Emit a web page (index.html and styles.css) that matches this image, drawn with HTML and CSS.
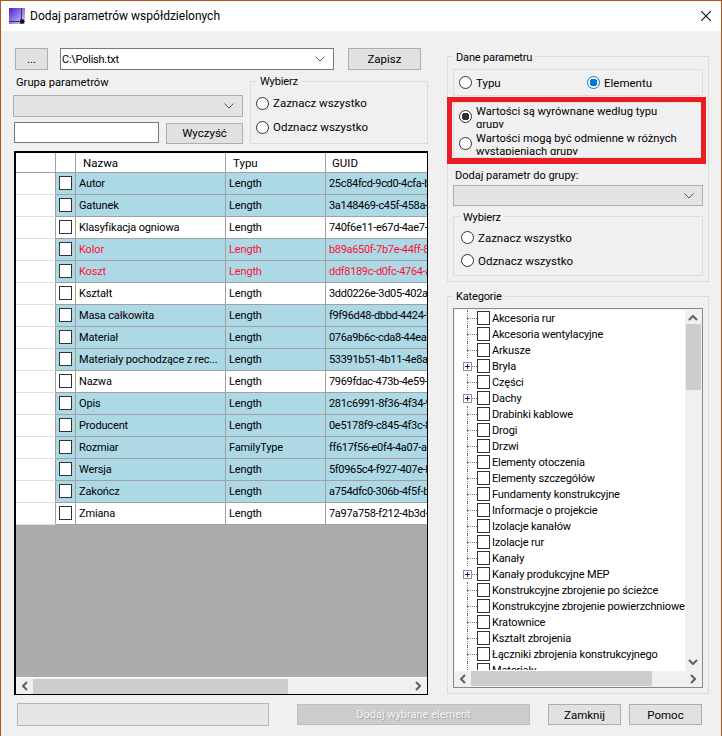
FILE: index.html
```html
<!DOCTYPE html>
<html lang="pl">
<head>
<meta charset="utf-8">
<title>Dodaj parametrów współdzielonych</title>
<link rel="stylesheet" href="styles.css">
</head>
<body>
<div class="window">
  <header class="titlebar">
    <svg class="app-icon" width="17" height="17" viewBox="0 0 17 17">
      <defs><linearGradient id="g" x1="0" y1="0" x2="1" y2="1"><stop offset="0" stop-color="#4a1fd6"/><stop offset="1" stop-color="#d9d2f5"/></linearGradient></defs>
      <rect width="16" height="16" fill="url(#g)"/>
      <path d="M0 13.5H16M12.5 0V16" stroke="#3b3560" stroke-width="1"/>
      <rect x="11" y="11.5" width="4" height="4" fill="#111"/>
    </svg>
    <span class="title">Dodaj parametrów współdzielonych</span>
    <svg class="close" width="10" height="10" viewBox="0 0 10 10"><path d="M0 0L10 10M10 0L0 10" stroke="#111" stroke-width="1.1"/></svg>
  </header>
  <main class="content">
    <section class="left">
      <div class="file-row">
        <button class="btn btn-dots">...</button>
        <div class="combo combo-file"><span>C:\Polish.txt</span><svg class="chev" width="10" height="6" viewBox="0 0 10 6"><path d="M.5 .5L5 5L9.5 .5" fill="none" stroke="#555"/></svg></div>
        <button class="btn btn-save">Zapisz</button>
      </div>
      <div class="filter-row">
        <div class="filter">
          <div class="filter-label">Grupa parametrów</div>
          <div class="combo combo-off combo-group"><svg class="chev" width="10" height="6" viewBox="0 0 10 6"><path d="M.5 .5L5 5L9.5 .5" fill="none" stroke="#555"/></svg></div>
          <div class="search-row">
            <div class="search"></div>
            <button class="btn btn-clear">Wyczyść</button>
          </div>
        </div>
        <div class="group group-select">
          <div class="legend">Wybierz</div>
          <label class="radio-row"><i class="radio"></i>Zaznacz wszystko</label>
          <label class="radio-row"><i class="radio"></i>Odznacz wszystko</label>
        </div>
      </div>
      <div class="table">
        <div class="tr th">
          <div class="rh"></div><div class="td"></div><div class="td h-name">Nazwa</div><div class="td h-name">Typu</div><div class="td h-name h-last">GUID</div>
        </div>
        <div class="tr blue"><div class="rh"></div><div class="td c"><i class="check"></i></div><div class="td">Autor</div><div class="td">Length</div><div class="td last">25c84fcd-9cd0-4cfa-b1e2</div></div>
        <div class="tr blue"><div class="rh"></div><div class="td c"><i class="check"></i></div><div class="td">Gatunek</div><div class="td">Length</div><div class="td last">3a148469-c45f-458a-9d10</div></div>
        <div class="tr"><div class="rh"></div><div class="td c"><i class="check"></i></div><div class="td">Klasyfikacja ogniowa</div><div class="td">Length</div><div class="td last">740f6e11-e67d-4ae7-8c21</div></div>
        <div class="tr blue red"><div class="rh"></div><div class="td c"><i class="check"></i></div><div class="td">Kolor</div><div class="td">Length</div><div class="td last">b89a650f-7b7e-44ff-8a02</div></div>
        <div class="tr blue red"><div class="rh"></div><div class="td c"><i class="check"></i></div><div class="td">Koszt</div><div class="td">Length</div><div class="td last">ddf8189c-d0fc-4764-a3b1</div></div>
        <div class="tr"><div class="rh"></div><div class="td c"><i class="check"></i></div><div class="td">Kształt</div><div class="td">Length</div><div class="td last">3dd0226e-3d05-402a-b7c4</div></div>
        <div class="tr blue"><div class="rh"></div><div class="td c"><i class="check"></i></div><div class="td">Masa całkowita</div><div class="td">Length</div><div class="td last">f9f96d48-dbbd-4424-9e70</div></div>
        <div class="tr blue"><div class="rh"></div><div class="td c"><i class="check"></i></div><div class="td">Materiał</div><div class="td">Length</div><div class="td last">076a9b6c-cda8-44ea-8f15</div></div>
        <div class="tr blue"><div class="rh"></div><div class="td c"><i class="check"></i></div><div class="td">Materiały pochodzące z rec...</div><div class="td">Length</div><div class="td last">53391b51-4b11-4e8a-a6d3</div></div>
        <div class="tr"><div class="rh"></div><div class="td c"><i class="check"></i></div><div class="td">Nazwa</div><div class="td">Length</div><div class="td last">7969fdac-473b-4e59-b2c8</div></div>
        <div class="tr blue"><div class="rh"></div><div class="td c"><i class="check"></i></div><div class="td">Opis</div><div class="td">Length</div><div class="td last">281c6991-8f36-4f34-9a47</div></div>
        <div class="tr blue"><div class="rh"></div><div class="td c"><i class="check"></i></div><div class="td">Producent</div><div class="td">Length</div><div class="td last">0e5178f9-c845-4f3c-8d66</div></div>
        <div class="tr blue"><div class="rh"></div><div class="td c"><i class="check"></i></div><div class="td">Rozmiar</div><div class="td">FamilyType</div><div class="td last">ff617f56-e0f4-4a07-a1b9</div></div>
        <div class="tr blue"><div class="rh"></div><div class="td c"><i class="check"></i></div><div class="td">Wersja</div><div class="td">Length</div><div class="td last">5f0965c4-f927-407e-b3d2</div></div>
        <div class="tr blue"><div class="rh"></div><div class="td c"><i class="check"></i></div><div class="td">Zakończ</div><div class="td">Length</div><div class="td last">a754dfc0-306b-4f5f-b8a1</div></div>
        <div class="tr"><div class="rh"></div><div class="td c"><i class="check"></i></div><div class="td">Zmiana</div><div class="td">Length</div><div class="td last">7a97a758-f212-4b3d-96e0</div></div>
        <div class="table-fill"></div>
        <div class="hbar hbar-table">
          <svg width="6" height="10" viewBox="0 0 6 10"><path d="M5 1L1 5L5 9" fill="none" stroke="#606060" stroke-width="2"/></svg>
          <div class="track"><div class="thumb thumb-table"></div></div>
          <svg width="6" height="10" viewBox="0 0 6 10"><path d="M1 1L5 5L1 9" fill="none" stroke="#606060" stroke-width="2"/></svg>
        </div>
      </div>
    </section>
    <section class="right">
      <div class="group group-data">
        <div class="legend">Dane parametru</div>
        <div class="box box-kind">
          <label class="radio-row kind-type"><i class="radio"></i>Typu</label>
          <label class="radio-row"><i class="radio radio-blue"></i>Elementu</label>
        </div>
        <div class="highlight">
          <label class="radio-wrap"><i class="radio radio-dark"></i><span class="clip">Wartości są wyrównane według typu grupy</span></label>
          <label class="radio-wrap"><i class="radio"></i><span class="clip">Wartości mogą być odmienne w różnych wystąpieniach grupy</span></label>
        </div>
        <div class="add-label">Dodaj parametr do grupy:</div>
        <div class="combo combo-off combo-add"><svg class="chev" width="10" height="6" viewBox="0 0 10 6"><path d="M.5 .5L5 5L9.5 .5" fill="none" stroke="#555"/></svg></div>
        <div class="group group-select2">
          <div class="legend">Wybierz</div>
          <label class="radio-row"><i class="radio"></i>Zaznacz wszystko</label>
          <label class="radio-row"><i class="radio"></i>Odznacz wszystko</label>
        </div>
      </div>
      <div class="group group-cat">
        <div class="legend">Kategorie</div>
        <div class="tree">
          <div class="tree-main">
            <ul class="tree-list">
              <li><i class="branch"></i><i class="check"></i>Akcesoria rur</li>
              <li><i class="branch"></i><i class="check"></i>Akcesoria wentylacyjne</li>
              <li><i class="branch"></i><i class="check"></i>Arkusze</li>
              <li><i class="branch plus"></i><i class="check"></i>Bryła</li>
              <li><i class="branch"></i><i class="check"></i>Części</li>
              <li><i class="branch plus"></i><i class="check"></i>Dachy</li>
              <li><i class="branch"></i><i class="check"></i>Drabinki kablowe</li>
              <li><i class="branch"></i><i class="check"></i>Drogi</li>
              <li><i class="branch"></i><i class="check"></i>Drzwi</li>
              <li><i class="branch"></i><i class="check"></i>Elementy otoczenia</li>
              <li><i class="branch"></i><i class="check"></i>Elementy szczegółów</li>
              <li><i class="branch"></i><i class="check"></i>Fundamenty konstrukcyjne</li>
              <li><i class="branch"></i><i class="check"></i>Informacje o projekcie</li>
              <li><i class="branch"></i><i class="check"></i>Izolacje kanałów</li>
              <li><i class="branch"></i><i class="check"></i>Izolacje rur</li>
              <li><i class="branch"></i><i class="check"></i>Kanały</li>
              <li><i class="branch plus"></i><i class="check"></i>Kanały produkcyjne MEP</li>
              <li><i class="branch"></i><i class="check"></i>Konstrukcyjne zbrojenie po ścieżce</li>
              <li><i class="branch"></i><i class="check"></i>Konstrukcyjne zbrojenie powierzchniowe</li>
              <li><i class="branch"></i><i class="check"></i>Kratownice</li>
              <li><i class="branch"></i><i class="check"></i>Kształt zbrojenia</li>
              <li><i class="branch"></i><i class="check"></i>Łączniki zbrojenia konstrukcyjnego</li>
              <li><i class="branch"></i><i class="check"></i>Materiały</li>
            </ul>
            <div class="vbar">
              <svg width="10" height="6" viewBox="0 0 10 6"><path d="M1 5L5 1L9 5" fill="none" stroke="#606060" stroke-width="2"/></svg>
              <div class="vtrack"><div class="vthumb"></div></div>
              <svg width="10" height="6" viewBox="0 0 10 6"><path d="M1 1L5 5L9 1" fill="none" stroke="#606060" stroke-width="2"/></svg>
            </div>
          </div>
          <div class="hbar hbar-tree">
            <svg width="6" height="10" viewBox="0 0 6 10"><path d="M5 1L1 5L5 9" fill="none" stroke="#606060" stroke-width="2"/></svg>
            <div class="track"><div class="thumb thumb-tree"></div></div>
            <svg width="6" height="10" viewBox="0 0 6 10"><path d="M1 1L5 5L1 9" fill="none" stroke="#606060" stroke-width="2"/></svg>
          </div>
        </div>
      </div>
    </section>
    <footer class="footer">
      <div class="status"></div>
      <button class="btn btn-add">Dodaj wybrane element</button>
      <button class="btn btn-foot btn-close">Zamknij</button>
      <button class="btn btn-foot">Pomoc</button>
    </footer>
  </main>
</div>
</body>
</html>
```

FILE: styles.css
```css
* { box-sizing: border-box; }
html, body { margin: 0; padding: 0; }
body { width: 722px; height: 736px; overflow: hidden; font-family: Roboto, "Noto Sans", sans-serif; font-size: 11px; color: #000; background: #f0f0f0; }

.window { width: 722px; height: 736px; border: 1px solid #b7541c; border-bottom: 0; display: flex; flex-direction: column; }

.titlebar { height: 30px; flex: none; background: #fff; display: flex; align-items: center; padding-left: 8px; }
.app-icon { margin-right: 4px; }
.title { font-size: 12px; flex: 1; }
.close { margin-right: 10px; margin-top: -1px; }

.content { flex: 1; display: grid; grid-template-columns: 414px 262px; grid-template-rows: 647px auto; column-gap: 19px; padding: 17px 0 0 13px; }

.left { display: flex; flex-direction: column; min-height: 0; }
.right { display: flex; flex-direction: column; padding-top: 8px; }

.btn { font: inherit; font-size: 11.5px; color: #000; background: #e1e1e1; border: 1px solid #adadad; padding: 0; height: 22px; line-height: 18px; }
.file-row { display: flex; align-items: flex-start; height: 22px; margin-left: 1px; }
.btn-dots { width: 33px; margin-right: 12px; }
.btn-save { width: 73px; margin-left: 14px; }

.combo { display: flex; align-items: center; justify-content: space-between; height: 22px; border: 1px solid #7a7a7a; background: #fff; padding: 0 4px 0 1px; }
.combo-file { width: 274px; letter-spacing: -.25px; }
.combo-off { background: #e3e3e3; border-color: #adadad; justify-content: flex-end; }
.chev { flex: none; margin-right: 4px; }

.filter-row { display: flex; margin-top: 11px; height: 64px; }
.filter { width: 230px; margin-left: -1px; margin-right: 7px; flex: none; }
.filter-label { height: 14px; line-height: 16px; margin: -6px 0 6px 3px; font-size: 11.2px; }
.combo-group { width: 230px; }
.search-row { display: flex; align-items: flex-start; margin-top: 5px; margin-left: 1px; }
.search { width: 145px; height: 21px; background: #fff; border: 1px solid #7a7a7a; }
.btn-clear { width: 77px; height: 21px; margin-left: 7px; margin-top: 1px; line-height: 17px; }

.group { border: 1px solid #dcdcdc; }
.legend { background: #f0f0f0; width: max-content; padding: 0 3px; margin: -7px 0 0 6px; height: 14px; line-height: 14px; letter-spacing: -.15px; }
.right .legend { line-height: 16px; }
.group-select { width: 178px; height: 63px; flex: none; }

.radio { flex: none; display: block; width: 13px; height: 13px; border: 1px solid #333; border-radius: 50%; background: #fff; }
.radio-blue { border-color: #0078d7; background: radial-gradient(circle, #0078d7 0 3.6px, #fff 4px); }
.radio-dark { background: radial-gradient(circle, #333 0 3.6px, #fff 4px); }
.radio-row { display: flex; align-items: center; gap: 4px; height: 23px; white-space: nowrap; font-size: 11.5px; }

.group-select .radio-row { padding-left: 5px; height: 24px; }
.group-select .legend { margin-bottom: 2px; }

.table { flex: none; margin-top: 7px; height: 544px; display: flex; flex-direction: column; border: 1px solid #000; border-top-width: 2px; border-left-width: 2px; background: #ababab; overflow: hidden; }
.tr { display: grid; grid-template-columns: 40px 20px 150px 100px 1fr; height: 22px; flex: none; background: #fff; }
.th { height: 20px; }
.blue { background: #add8e6; }
.red { color: #ff1133; }
.rh { background: #fff; border-right: 1px solid #a0a0a0; border-bottom: 1px solid #e0e0e0; }
.th .rh { border-bottom-color: #a0a0a0; }
.td { border-right: 1px solid #a0a0a0; border-bottom: 1px solid #a0a0a0; padding: 1px 0 0 3px; line-height: 20px; white-space: nowrap; overflow: hidden; letter-spacing: -.15px; }
.th .td { padding-top: 0; line-height: 20px; font-size: 11.5px; letter-spacing: 0; }
.td.last { border-right: 0; letter-spacing: -.32px; }
.td.h-name { padding-left: 7px; }
.td.h-last { padding-left: 6px; border-right: 0; }
.td.c { padding: 3px 0 0 3px; }
.check { display: block; flex: none; width: 13px; height: 14px; border: 1px solid #333; background: #fff; }

.table-fill { flex: 1; }
.hbar { display: flex; align-items: center; background: #f0f0f0; flex: none; }
.hbar-table { height: 17px; border-top: 1px solid #fff; padding: 0 6px; }
.track { flex: 1; height: 15px; margin: 0 5px; }
.thumb { height: 15px; background: #cdcdcd; }
.thumb-table { width: 255px; }

.group-data { height: 226px; padding: 5px 5px 0; flex: none; }
.group-data .legend { margin: -12px 0 0; }
.box { border: 1px solid #dcdcdc; }
.box-kind { height: 27px; display: flex; align-items: center; padding-left: 5px; margin-top: 5px; }
.kind-type { width: 128px; }

.highlight { position: relative; height: 56px; margin-top: 6px; padding: 0 5px; border: 1px solid #dcdcdc; }
.highlight::after { content: ""; position: absolute; left: -7px; right: -4px; top: -6px; bottom: -7px; border: solid #ed1c24; border-width: 5px 5px 6px 5px; }
.radio-wrap { display: flex; align-items: center; gap: 4px; height: 27px; font-size: 11.2px; }
.clip { display: block; height: 23px; overflow: hidden; line-height: 13px; width: 208px; }

.add-label { margin: 9px 0 0 2px; height: 15px; line-height: 17px; }
.combo-add { height: 21px; margin-top: 3px; }
.group-select2 { height: 60px; margin-top: 10px; padding-left: 7px; }
.group-select2 .legend { margin: -7px 0 2px -1px; }
.group-select2 .radio-row { height: 23px; }

.group-cat { margin-top: 14px; height: 398px; padding: 5px 5px 0; flex: none; }
.group-cat .legend { margin: -13px 0 0; }
.tree { height: 380px; border: 1px solid #828790; background: #f0f0f0; padding: 1px; margin-top: 5px; display: flex; flex-direction: column; overflow: hidden; }
.tree-main { flex: 1; min-height: 0; display: flex; background: #fff; }
.tree-list { list-style: none; margin: 0; padding: 0; flex: 1; min-width: 0; height: 360px; overflow: hidden; background: #fff; letter-spacing: -.15px; }
.tree-list li { display: flex; align-items: center; height: 16px; white-space: nowrap; }
.tree-list .check { margin-right: 2px; }
.branch { position: relative; display: block; flex: none; width: 22px; height: 16px; }
.branch::before { content: ""; position: absolute; left: 12px; top: 0; bottom: 0; border-left: 1px dotted #777; }
.branch::after { content: ""; position: absolute; left: 12px; right: 0; top: 8px; border-top: 1px dotted #777; }
.plus::before { border: 0; left: 9px; top: 5px; bottom: auto; width: 7px; height: 7px; outline: 1px solid #8f8f9d; background: linear-gradient(#1e1e6e, #1e1e6e) center / 5px 1px no-repeat, linear-gradient(#1e1e6e, #1e1e6e) center / 1px 5px no-repeat, #fff; z-index: 1; }
.plus::after { left: 17px; }

.vbar { flex: none; width: 16px; background: #f0f0f0; display: flex; flex-direction: column; align-items: center; padding: 5px 0 6px; }
.vtrack { flex: 1; width: 15px; margin: 3px 0 0; }
.vthumb { width: 15px; height: 66px; background: #cdcdcd; }
.hbar-tree { height: 15px; padding: 0 5px; }
.hbar-tree .track { margin-left: 5px; margin-right: 18px; }
.thumb-tree { width: 181px; }

.footer { grid-column: 1 / 3; display: flex; align-items: flex-start; margin-top: 8px; padding-left: 3px; }
.status { width: 252px; height: 23px; background: #e6e6e6; border: 1px solid #b8b8b8; }
.btn-add { width: 233px; height: 21px; margin: 1px 0 0 28px; background: #cccccc; border-color: #bfbfbf; color: #f4f4f4; font-size: 11px; text-shadow: 1px 1px 0 #a8a8a8; }
.btn-foot { width: 73px; height: 21px; margin-top: 1px; margin-left: 8px; }
.btn-close { margin-left: 18px; }
```
